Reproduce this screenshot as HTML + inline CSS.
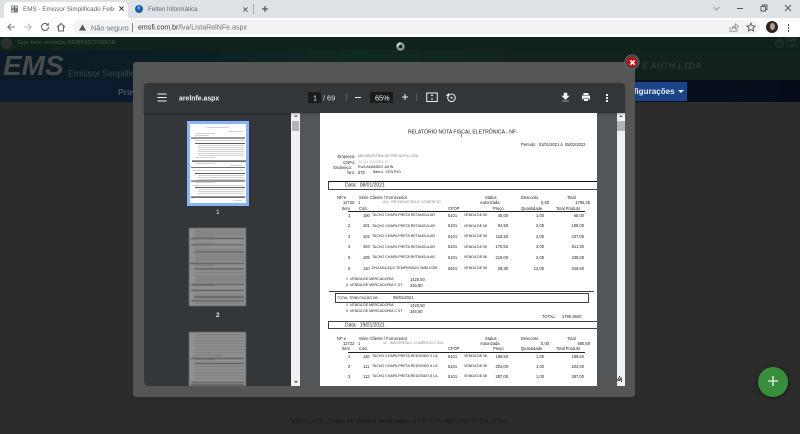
<!DOCTYPE html>
<html lang="pt-BR"><head><meta charset="utf-8"><title>EMS</title>
<style>
html,body{margin:0;padding:0;background:#2b2b2b}
body{position:relative;width:800px;height:434px;overflow:hidden;font-family:"Liberation Sans",sans-serif}
#w{position:absolute;left:0;top:0;width:800px;height:434px;overflow:hidden;background:#2b2b2b;filter:blur(.3px)}
.a{position:absolute}
.x{position:absolute;white-space:nowrap;line-height:1;transform:translateY(-50%)}
.t{position:absolute;white-space:nowrap;line-height:1;transform:translateY(-50%);font-size:4.1px;color:#222;margin-top:.7px}
.c{font-size:3.6px;margin-top:1px}
.r{transform:translate(-100%,-50%)}
svg{position:absolute;overflow:visible}
</style></head><body><div id="w">

<!-- browser chrome -->
<div class="a" style="left:0;top:0;width:800px;height:18px;background:#dee1e6"></div>
<div class="a" style="left:4px;top:2px;width:124px;height:16px;background:#fff;border-radius:5px 5px 0 0"></div>
<div class="a" style="left:0;top:18px;width:800px;height:19px;background:#fff"></div>
<div class="a" style="left:73px;top:20px;width:687px;height:14px;background:#f1f3f4;border-radius:7px"></div>

<svg style="left:11px;top:5px" width="7" height="8" viewBox="0 0 10 10"><rect width="10" height="10" fill="#777"/><path d="M1 1h3v3H1zM6 1h3v3H6zM1 6h3v3H1zM6 6h1v1H6zM8 8h1v1H8z" fill="#ddd"/></svg>
<div class="x" style="left:23px;top:10px;width:91px;height:8px;overflow:hidden;font-size:6.300px;line-height:8px;color:#666">EMS - Emissor Simplificado Felten</div>
<svg style="left:118.500px;top:6px" width="5" height="5" viewBox="0 0 6 6"><path d="M.5.5l5 5M5.500.5l-5 5" stroke="#333" stroke-width="1.200"/></svg>
<div class="a" style="left:135px;top:5px;width:8px;height:8px;border-radius:50%;background:#1f5ea8"></div>
<div class="x" style="left:137.500px;top:8.500px;font-size:5px;color:#fff">n</div>
<div class="x" style="left:148px;top:10px;font-size:6.200px;line-height:8px;color:#666">Felten Informática</div>
<svg style="left:243px;top:6.500px" width="5" height="5" viewBox="0 0 6 6"><path d="M.5.5l5 5M5.500.5l-5 5" stroke="#555" stroke-width="1.100"/></svg>
<div class="a" style="left:253px;top:4px;width:1px;height:10px;background:#a5a8ad"></div>
<svg style="left:261px;top:5px" width="8" height="8" viewBox="0 0 8 8"><path d="M4 1v6M1 4h6" stroke="#555" stroke-width="1.200"/></svg>

<svg style="left:713px;top:6px" width="7" height="5" viewBox="0 0 7 5"><path d="M.5 1L3.500 4 6.500 1" fill="none" stroke="#888" stroke-width=".8"/></svg>
<div class="a" style="left:737px;top:8px;width:6px;height:1px;background:#555"></div>
<svg style="left:760px;top:4px" width="8" height="8" viewBox="0 0 8 8"><path d="M1 2.500h4.500V7H1zM2.500 2.500V1H7v4.500H5.500" fill="none" stroke="#555" stroke-width=".9"/></svg>
<svg style="left:784px;top:4px" width="8" height="8" viewBox="0 0 8 8"><path d="M1 1l6 6M7 1L1 7" stroke="#555" stroke-width=".9"/></svg>

<svg style="left:6px;top:22px" width="10" height="10" viewBox="0 0 10 10"><path d="M9 5H2M5 1.800L1.800 5 5 8.200" fill="none" stroke="#777" stroke-width="1.100"/></svg>
<svg style="left:23px;top:22px" width="10" height="10" viewBox="0 0 10 10"><path d="M1 5h7M5 1.800L8.200 5 5 8.200" fill="none" stroke="#bbb" stroke-width="1.100"/></svg>
<svg style="left:40px;top:22px" width="10" height="10" viewBox="0 0 10 10"><path d="M8.500 5A3.500 3.500 0 1 1 7.500 2.500" fill="none" stroke="#666" stroke-width="1.100"/><path d="M8.800 .8v3H5.800z" fill="#666"/></svg>
<svg style="left:56px;top:22px" width="10" height="10" viewBox="0 0 10 10"><path d="M1 5.200L5 1.500 9 5.200M2.500 4.500V9h5V4.500" fill="none" stroke="#666" stroke-width="1.100"/></svg>
<svg style="left:79px;top:24px" width="7" height="7" viewBox="0 0 7 7"><path d="M3.500.5L7 6.500H0z" fill="#555"/></svg>
<div class="x" style="left:91px;top:27.500px;font-size:7.300px;color:#70757a">Não seguro</div>
<div class="a" style="left:132px;top:23px;width:1px;height:9px;background:#888"></div>
<div class="x" style="left:138px;top:27.500px;font-size:7.050px;color:#70757a"><span style="color:#333">emsfi.com.br</span>/lva/ListaRelNFe.aspx</div>
<svg style="left:729px;top:23px" width="10" height="9" viewBox="0 0 10 9"><path d="M1 4v4.200h7V6M3 5.500C3.500 3.500 5 2.800 6.500 2.800V1L9.500 3.500 6.500 6V4.300C5 4.300 4 4.600 3 5.500z" fill="none" stroke="#888" stroke-width=".8"/></svg>
<svg style="left:746px;top:22px" width="10" height="10" viewBox="0 0 10 10"><path d="M5 1l1.200 2.800 3 .3-2.300 2 .7 3L5 7.500 2.400 9.100l.7-3-2.300-2 3-.3z" fill="none" stroke="#555" stroke-width=".9"/></svg>
<div class="a" style="left:766px;top:21px;width:12px;height:12px;border-radius:50%;background:#2b2422"></div>
<div class="a" style="left:770px;top:23px;width:5px;height:7px;border-radius:50%;background:#b89a8a"></div>
<div class="a" style="left:787.500px;top:24px;width:1.500px;height:1.500px;background:#444;box-shadow:0 3px 0 #444,0 6px 0 #444"></div>

<!-- dimmed page -->
<div class="a" style="left:0;top:37px;width:800px;height:13px;background:#10231a"></div>
<div class="a" style="left:0;top:50px;width:800px;height:30px;background:linear-gradient(90deg,#0b1a26 0,#0b2024 25%,#0f2a20 45%,#13231b 65%,#13231b 100%)"></div>
<div class="a" style="left:0;top:80px;width:800px;height:22px;background:linear-gradient(90deg,#0b1c30 0,#0b1a2e 40%,#060c1a 100%)"></div>
<div class="a" style="left:1px;top:38px;width:11px;height:11px;border-radius:50%;background:#2a312d"></div>
<div class="x" style="left:17px;top:43.500px;font-size:5.700px;font-weight:700;color:#36483d">Seja bem-vindo(a) ADMINISTRADOR</div>
<div class="x" style="left:3px;top:65.500px;font-size:28px;font-weight:700;font-style:italic;color:#474b4c">EMS</div>
<div class="x" style="left:68px;top:74px;font-size:8.800px;color:#36464e">Emissor Simplificado</div>
<div class="x" style="left:118px;top:92px;font-size:8.500px;font-weight:700;color:#4b5560">Principal</div>
<div class="x" style="left:642px;top:65.500px;font-size:8.600px;font-weight:700;font-style:italic;color:#2b3b32;letter-spacing:.3px">E AUTH LTDA</div>
<div class="a" style="left:620px;top:82px;width:67px;height:19px;background:#1c4587"></div>
<div class="x" style="left:618px;top:92px;font-size:8.100px;font-weight:700;color:#e6edf6">Configurações</div>
<div class="a" style="left:678px;top:90px;border:3px solid transparent;border-top:3px solid #e6edf6;border-bottom:0"></div>
<svg style="left:775px;top:39px" width="9" height="9" viewBox="0 0 9 9"><circle cx="4.500" cy="4.500" r="3.800" fill="none" stroke="#2d3d34" stroke-width="1"/><path d="M4.500 1.500v3" stroke="#2d3d34"/></svg>
<div class="x" style="left:785px;top:41px;font-size:5px;font-weight:700;color:#2d3d34">SAIR</div>
<div class="x" style="left:787px;top:46px;font-size:3.500px;font-weight:700;color:#2d3d34">Logoff</div>
<div class="x" style="left:291px;top:422px;font-size:6.500px;color:#191919">V2021.u12 | Todos os direitos reservados a FELTEN INFORMÁTICA LTDA.</div>

<!-- FAB -->
<div class="a" style="left:758px;top:367px;width:30px;height:30px;border-radius:50%;background:#388e3c;box-shadow:0 1px 4px rgba(0,0,0,.4)"></div>
<svg style="left:767px;top:375px" width="12" height="12" viewBox="0 0 12 12"><path d="M6 1v10M1 6h10" stroke="#d5e5d6" stroke-width="1.600"/></svg>

<!-- loader -->
<svg style="left:395.500px;top:42px" width="9" height="9" viewBox="0 0 9 9"><circle cx="4.500" cy="4.500" r="3" fill="none" stroke="#8e9692" stroke-width="2.400"/><path d="M1.500 4.500a3 3 0 0 1 3-3" fill="none" stroke="#c8cdca" stroke-width="2.400"/></svg>

<!-- modal -->
<div class="a" style="left:133px;top:62px;width:502px;height:335px;background:#555;border-radius:3px"></div>
<div class="a" style="left:144px;top:83px;width:481px;height:303px;background:#525659;border-radius:4px 4px 0 0"></div>
<div class="a" style="left:144px;top:113px;width:147px;height:273px;background:#33373a;border-radius:0 0 0 4px"></div>
<div class="a" style="left:291px;top:113px;width:9px;height:273px;background:#f1f1f1"></div>
<div class="a" style="left:292px;top:121px;width:7px;height:10px;background:#b4b4b4"></div>
<div class="a" style="left:294px;top:115px;border:2px solid transparent;border-bottom:2.500px solid #666;border-top:0"></div>
<div class="a" style="left:294px;top:381px;border:2px solid transparent;border-top:2.500px solid #444;border-bottom:0"></div>
<div class="a" style="left:616.500px;top:113px;width:8.500px;height:273px;background:#f1f1f1"></div>
<div class="a" style="left:617px;top:121px;width:7.500px;height:10px;background:#b4b4b4"></div>
<div class="a" style="left:619px;top:115px;border:2px solid transparent;border-bottom:2.500px solid #666;border-top:0"></div>
<svg style="left:616px;top:375px" width="9" height="9" viewBox="0 0 9 9"><path d="M4 1L1.500 5l2 .5L5 3l.5 4" fill="none" stroke="#333" stroke-width="1"/></svg>

<!-- toolbar -->
<div class="a" style="left:144px;top:83px;width:481px;height:30px;background:#323639;border-radius:4px 4px 0 0;box-shadow:0 1px 2px rgba(0,0,0,.3)"></div>
<svg style="left:157px;top:93px" width="10" height="9" viewBox="0 0 10 9"><path d="M.5 1h9M.5 4.500h9M.5 8h9" stroke="#f1f1f1" stroke-width="1.100"/></svg>
<div class="x" style="left:179px;top:99.500px;font-size:6.900px;font-weight:700;color:#f1f1f1">arelnfe.aspx</div>
<div class="a" style="left:308px;top:92px;width:13px;height:11px;background:#191b1c"></div>
<div class="x" style="left:313px;top:97.500px;font-size:7.300px;color:#f1f1f1">1</div>
<div class="x" style="left:323px;top:97.500px;font-size:7.300px;color:#e0e0e0">/ 69</div>
<div class="a" style="left:346px;top:93px;width:1px;height:8px;background:#55595c"></div>
<div class="a" style="left:355px;top:97px;width:6px;height:1px;background:#f1f1f1"></div>
<div class="a" style="left:370px;top:92px;width:23px;height:11px;background:#191b1c"></div>
<div class="x" style="left:375px;top:97.500px;font-size:7.300px;color:#f1f1f1">65%</div>
<svg style="left:401px;top:93px" width="8" height="8" viewBox="0 0 8 8"><path d="M4 1v6M1 4h6" stroke="#f1f1f1" stroke-width="1"/></svg>
<div class="a" style="left:416px;top:93px;width:1px;height:8px;background:#55595c"></div>
<svg style="left:426px;top:92px" width="12" height="11" viewBox="0 0 12 11"><rect x=".7" y="1" width="10.600" height="8.500" fill="none" stroke="#f1f1f1" stroke-width="1"/><path d="M6 2.500L4.500 4h3zM6 8L4.500 6.500h3z" fill="#f1f1f1"/></svg>
<svg style="left:445px;top:92px" width="12" height="11" viewBox="0 0 12 11"><circle cx="6.500" cy="5.800" r="3.800" fill="none" stroke="#f1f1f1" stroke-width="1"/><circle cx="6.500" cy="5.800" r="1" fill="#f1f1f1"/><path d="M1 3.500l3-2.500v3.500z" fill="#f1f1f1"/></svg>
<svg style="left:561px;top:92px" width="9" height="10" viewBox="0 0 9 10"><path d="M3 1h3v3h2L4.500 7.500 1 4h2zM1 9h7" fill="#f1f1f1" stroke="#f1f1f1" stroke-width=".6"/></svg>
<svg style="left:581px;top:92px" width="10" height="10" viewBox="0 0 10 10"><path d="M2.500 1h5v2h-5zM1 3.500h8v4H7.500V6h-5v1.500H1zM3 6.500h4V9H3z" fill="#f1f1f1"/></svg>
<div class="a" style="left:606px;top:94px;width:2px;height:1.500px;background:#f1f1f1;box-shadow:0 3px 0 #f1f1f1,0 6px 0 #f1f1f1"></div>

<!-- thumbnails -->
<div class="a" style="left:187px;top:121px;width:62px;height:85px;background:#8ab4f8"></div>
<div class="a" style="left:190px;top:124px;width:56px;height:79px;background:#fff"></div>
<svg style="left:190px;top:124px;filter:blur(.35px)" width="56" height="79" viewBox="0 0 56 79">
<g fill="#d2d2d2"><rect x="17" y="3" width="22" height="1"/><rect x="38" y="7" width="15" height="1"/><rect x="5" y="9" width="20" height="1"/><rect x="5" y="11" width="14" height="1"/><rect x="5" y="16" width="50" height="1"/><rect x="8" y="21" width="46" height="1"/><rect x="8" y="23" width="46" height="1"/><rect x="8" y="25" width="46" height="1"/><rect x="8" y="27" width="46" height="1"/><rect x="8" y="29" width="46" height="1"/><rect x="8" y="31" width="46" height="1"/><rect x="5" y="33" width="20" height="1"/><rect x="5" y="39" width="20" height="1"/><rect x="40" y="41" width="12" height="1"/><rect x="3" y="46" width="50" height="1"/><rect x="8" y="51" width="46" height="1"/><rect x="8" y="53" width="46" height="1"/><rect x="8" y="55" width="46" height="1"/><rect x="5" y="58" width="20" height="1"/><rect x="3" y="61" width="50" height="1"/><rect x="8" y="65" width="46" height="1"/><rect x="8" y="67" width="46" height="1"/><rect x="8" y="69" width="46" height="1"/><rect x="44" y="76" width="8" height="1"/></g>
<g fill="#333"><rect x="1" y="13.500" width="54" height="1"/><rect x="5" y="19" width="50" height=".8"/><rect x="2" y="36.500" width="54" height="1.200"/><rect x="1" y="43" width="54" height=".7"/><rect x="5" y="49" width="50" height=".8"/><rect x="1" y="56.500" width="54" height="1"/><rect x="5" y="63" width="50" height=".8"/><rect x="1" y="72.500" width="54" height="1.200"/></g>
</svg>
<div class="x" style="left:216px;top:212.500px;font-size:6.500px;color:#e8e8e8">1</div>

<svg style="left:189px;top:228px;filter:blur(.4px)" width="57" height="78" viewBox="0 0 57 78">
<rect width="57" height="78" fill="#909090"/>
<g fill="#7a7a7a"><rect x="6" y="2" width="50" height="1"/><rect x="6" y="4" width="50" height="1"/><rect x="6" y="6" width="50" height="1"/><rect x="6" y="8" width="20" height="1"/><rect x="6" y="15" width="20" height="1"/><rect x="6" y="21" width="48" height="1"/><rect x="6" y="26" width="50" height="1"/><rect x="6" y="28" width="50" height="1"/><rect x="6" y="30" width="50" height="1"/><rect x="6" y="32" width="50" height="1"/><rect x="6" y="37" width="20" height="1"/><rect x="6" y="44" width="50" height="1"/><rect x="6" y="47" width="50" height="1"/><rect x="6" y="49" width="50" height="1"/><rect x="6" y="51" width="50" height="1"/><rect x="6" y="53" width="50" height="1"/><rect x="4" y="57" width="20" height="1"/><rect x="6" y="66" width="50" height="1"/><rect x="6" y="70" width="50" height="1"/><rect x="6" y="75" width="50" height="1"/></g>
<g fill="#3a3a3a"><rect x="2" y="10" width="53" height=".8"/><rect x="2" y="16.500" width="53" height=".6"/><rect x="5" y="23.500" width="50" height=".8"/><rect x="1" y="35" width="54" height=".8"/><rect x="5" y="40.500" width="50" height=".8"/><rect x="2" y="56" width="53" height=".8"/><rect x="2" y="62" width="53" height=".8"/><rect x="5" y="68.500" width="50" height=".8"/><rect x="2" y="72.500" width="53" height=".8"/></g>
</svg>
<div class="x" style="left:216px;top:315.500px;font-size:6.500px;font-weight:700;color:#e8e8e8">2</div>

<svg style="left:189px;top:332px;filter:blur(.4px)" width="57" height="54" viewBox="0 0 57 54">
<rect width="57" height="54" fill="#909090"/>
<g fill="#7a7a7a"><rect x="6" y="2" width="50" height="1"/><rect x="6" y="5" width="50" height="1"/><rect x="6" y="8" width="50" height="1"/><rect x="6" y="11" width="50" height="1"/><rect x="6" y="14" width="50" height="1"/><rect x="6" y="17" width="50" height="1"/><rect x="6" y="20" width="50" height="1"/><rect x="6" y="23" width="28" height="1"/><rect x="6" y="27" width="20" height="1"/><rect x="6" y="34" width="50" height="1"/><rect x="6" y="37" width="50" height="1"/><rect x="6" y="40" width="50" height="1"/><rect x="6" y="43" width="50" height="1"/><rect x="6" y="46" width="50" height="1"/></g>
<g fill="#3a3a3a"><rect x="2" y="26" width="53" height=".8"/><rect x="5" y="31" width="50" height=".8"/><rect x="2" y="50" width="53" height=".8"/><rect x="2" y="52.500" width="53" height=".8"/></g>
</svg>

<!-- report page -->
<div class="a" style="left:0;top:0;width:800px;height:434px;clip-path:inset(113px 203px 48px 320px)">
<div class="a" style="left:320px;top:113px;width:277px;height:273px;background:#fff"></div>
<div class="t" style="left:408px;top:132.500px;font-size:5.100px;color:#222">RELATÓRIO NOTA FISCAL ELETRÔNICA - NF-</div>
<div class="t" style="left:461px;top:136px;font-size:5px;color:#222">I</div>
<div class="t" style="left:521px;top:144px">Período:&nbsp; 01/01/2021 à&nbsp; 05/02/2022</div>
<div class="t r" style="left:355px;top:156px">Empresa:</div><div class="t c" style="left:358px;top:156px;color:#777">ME INDUSTRIA DE PRE AUTH LTDA</div>
<div class="t r" style="left:355px;top:162px">CNPJ:</div><div class="t c" style="left:358px;top:162px;color:#aaa">11.111.111/0001-11</div>
<div class="t r" style="left:352px;top:167px">Endereço:</div><div class="t c" style="left:358px;top:167px">RUA AMANDIO JAHN</div>
<div class="t r" style="left:355px;top:172px">Nro:</div><div class="t" style="left:358px;top:172px">575</div><div class="t c" style="left:373px;top:172px">Bairro:&nbsp; CENTRO</div>

<div class="a" style="left:328px;top:181px;width:280px;height:7px;border:1px solid #444;border-top:1px solid #111"></div>
<div class="t" style="left:345px;top:185.500px;font-size:5px">Data:&nbsp; 08/01/2021</div>
<div class="t" style="left:337px;top:197px">NF-e</div><div class="t" style="left:359px;top:197px">Série</div><div class="t" style="left:370px;top:197px">Cliente / Fornecedor</div><div class="t" style="left:485px;top:197px">Status</div><div class="t" style="left:521px;top:197px">Desconto</div><div class="t" style="left:567px;top:197px">Total</div>
<div class="t" style="left:343px;top:202px">12720</div><div class="t" style="left:358px;top:202px">1</div><div class="t c" style="left:382px;top:202px;color:#888">104 - RR INDÚSTRIA E COMÉRCIO</div><div class="t" style="left:480px;top:202px">Autorizada</div><div class="t r" style="left:549px;top:202px">0,00</div><div class="t r" style="left:590px;top:202px">1790,36</div>
<div class="t" style="left:342px;top:208px">Item</div><div class="t" style="left:359px;top:208px">Cód.</div><div class="t" style="left:448px;top:208px">CFOP</div><div class="t" style="left:493px;top:208px">Preço</div><div class="t" style="left:521px;top:208px">Quantidade</div><div class="t" style="left:556px;top:208px">Total Produto</div>
<div class="a" style="left:348px;top:210.500px;width:237px;height:1px;background:#222"></div>

<div class="t" style="left:348px;top:215px">1</div><div class="t" style="left:363px;top:215px">100</div><div class="t c" style="left:372px;top:215px">TACHO CHAPA PRETA RETANGULAR</div><div class="t" style="left:448px;top:215px">5101</div><div class="t c" style="left:464px;top:215px">VENDA DE MI</div><div class="t r" style="left:508px;top:215px">45,00</div><div class="t r" style="left:544px;top:215px">1,00</div><div class="t r" style="left:584px;top:215px">45,00</div>
<div class="t" style="left:348px;top:225.500px">2</div><div class="t" style="left:363px;top:225.500px">101</div><div class="t c" style="left:372px;top:225.500px">TACHO CHAPA PRETA RETANGULAR</div><div class="t" style="left:448px;top:225.500px">5101</div><div class="t c" style="left:464px;top:225.500px">VENDA DE MI</div><div class="t r" style="left:508px;top:225.500px">94,50</div><div class="t r" style="left:544px;top:225.500px">2,00</div><div class="t r" style="left:584px;top:225.500px">189,00</div>
<div class="t" style="left:348px;top:236px">3</div><div class="t" style="left:363px;top:236px">102</div><div class="t c" style="left:372px;top:236px">TACHO CHAPA PRETA RETANGULAR</div><div class="t" style="left:448px;top:236px">5101</div><div class="t c" style="left:464px;top:236px">VENDA DE MI</div><div class="t r" style="left:508px;top:236px">118,50</div><div class="t r" style="left:544px;top:236px">2,00</div><div class="t r" style="left:584px;top:236px">237,00</div>
<div class="t" style="left:348px;top:246.500px">4</div><div class="t" style="left:363px;top:246.500px">104</div><div class="t c" style="left:372px;top:246.500px">TACHO CHAPA PRETA RETANGULAR</div><div class="t" style="left:448px;top:246.500px">5101</div><div class="t c" style="left:464px;top:246.500px">VENDA DE MI</div><div class="t r" style="left:508px;top:246.500px">170,50</div><div class="t r" style="left:544px;top:246.500px">3,00</div><div class="t r" style="left:584px;top:246.500px">511,50</div>
<div class="t" style="left:348px;top:257px">5</div><div class="t" style="left:363px;top:257px">105</div><div class="t c" style="left:372px;top:257px">TACHO CHAPA PRETA RETANGULAR</div><div class="t" style="left:448px;top:257px">5101</div><div class="t c" style="left:464px;top:257px">VENDA DE MI</div><div class="t r" style="left:508px;top:257px">219,00</div><div class="t r" style="left:544px;top:257px">2,00</div><div class="t r" style="left:584px;top:257px">438,00</div>
<div class="t" style="left:348px;top:268px">6</div><div class="t" style="left:363px;top:268px">110</div><div class="t c" style="left:372px;top:268px">ENXADA AÇO TEMPERADO 3MM COM</div><div class="t" style="left:448px;top:268px">5401</div><div class="t c" style="left:464px;top:268px">VENDA DE MI</div><div class="t r" style="left:508px;top:268px">28,90</div><div class="t r" style="left:544px;top:268px">12,00</div><div class="t r" style="left:584px;top:268px">346,80</div>

<div class="t c" style="left:346px;top:279px">1&nbsp; VENDA DE MERCADORIA</div><div class="t" style="left:410px;top:279px">1420,50</div>
<div class="t c" style="left:346px;top:285px">5&nbsp; VENDA DE MERCADORIA C ST</div><div class="t" style="left:410px;top:285px">346,80</div>
<div class="a" style="left:329px;top:291px;width:265px;height:1px;background:#444"></div>
<div class="a" style="left:335px;top:293px;width:252px;height:8px;border:1px solid #444"></div>
<div class="t c" style="left:337px;top:297.500px">TOTAL TRIBUTAÇÃO DE:</div><div class="t" style="left:393px;top:297.500px">08/01/2021</div>
<div class="t c" style="left:346px;top:305px">1&nbsp; VENDA DE MERCADORIA</div><div class="t" style="left:410px;top:305px">1420,50</div>
<div class="t c" style="left:346px;top:311px">5&nbsp; VENDA DE MERCADORIA C ST</div><div class="t" style="left:410px;top:311px">346,80</div>
<div class="t" style="left:542px;top:316px">TOTAL:</div><div class="t" style="left:562px;top:316px">1790,3600</div>

<div class="a" style="left:328px;top:321px;width:280px;height:6px;border:1px solid #444"></div>
<div class="t" style="left:345px;top:325px;font-size:5px">Data:&nbsp; 19/01/2021</div>
<div class="t" style="left:337px;top:338px">NF-e</div><div class="t" style="left:359px;top:338px">Série</div><div class="t" style="left:370px;top:338px">Cliente / Fornecedor</div><div class="t" style="left:485px;top:338px">Status</div><div class="t" style="left:521px;top:338px">Desconto</div><div class="t" style="left:567px;top:338px">Total</div>
<div class="t" style="left:343px;top:343px">12722</div><div class="t" style="left:358px;top:343px">1</div><div class="t c" style="left:383px;top:343px;color:#888">11 - INDÚSTRIA E COMÉRCIO LTDA</div><div class="t" style="left:480px;top:343px">Autorizada</div><div class="t r" style="left:549px;top:343px">0,00</div><div class="t r" style="left:590px;top:343px">680,50</div>
<div class="t" style="left:342px;top:348px">Item</div><div class="t" style="left:359px;top:348px">Cód.</div><div class="t" style="left:448px;top:348px">CFOP</div><div class="t" style="left:493px;top:348px">Preço</div><div class="t" style="left:521px;top:348px">Quantidade</div><div class="t" style="left:556px;top:348px">Total Produto</div>
<div class="a" style="left:348px;top:351.500px;width:237px;height:1px;background:#222"></div>
<div class="t" style="left:348px;top:356px">1</div><div class="t" style="left:363px;top:356px">110</div><div class="t c" style="left:372px;top:356px">TACHO CHAPA PRETA REDONDO 4 LA</div><div class="t" style="left:448px;top:356px">5101</div><div class="t c" style="left:464px;top:356px">VENDA DE MI</div><div class="t r" style="left:508px;top:356px">189,50</div><div class="t r" style="left:544px;top:356px">1,00</div><div class="t r" style="left:584px;top:356px">189,50</div>
<div class="t" style="left:348px;top:366px">2</div><div class="t" style="left:363px;top:366px">111</div><div class="t c" style="left:372px;top:366px">TACHO CHAPA PRETA REDONDO 6 LA</div><div class="t" style="left:448px;top:366px">5101</div><div class="t c" style="left:464px;top:366px">VENDA DE MI</div><div class="t r" style="left:508px;top:366px">204,00</div><div class="t r" style="left:544px;top:366px">1,00</div><div class="t r" style="left:584px;top:366px">204,00</div>
<div class="t" style="left:348px;top:376px">3</div><div class="t" style="left:363px;top:376px">112</div><div class="t c" style="left:372px;top:376px">TACHO CHAPA PRETA REDONDO 8 LA</div><div class="t" style="left:448px;top:376px">5101</div><div class="t c" style="left:464px;top:376px">VENDA DE MI</div><div class="t r" style="left:508px;top:376px">287,00</div><div class="t r" style="left:544px;top:376px">1,00</div><div class="t r" style="left:584px;top:376px">287,00</div>
</div>

<!-- close button -->
<div class="a" style="left:624.500px;top:54.500px;width:10px;height:10px;border-radius:50%;background:#c40d0d;border:2.500px solid #4a4a4a;box-shadow:0 0 0 .5px #777"></div>
<svg style="left:628.500px;top:58.500px" width="7" height="7" viewBox="0 0 8 8"><path d="M1.500 1.500l5 5M6.500 1.500l-5 5" stroke="#fff" stroke-width="1.800"/></svg>

</div></body></html>
